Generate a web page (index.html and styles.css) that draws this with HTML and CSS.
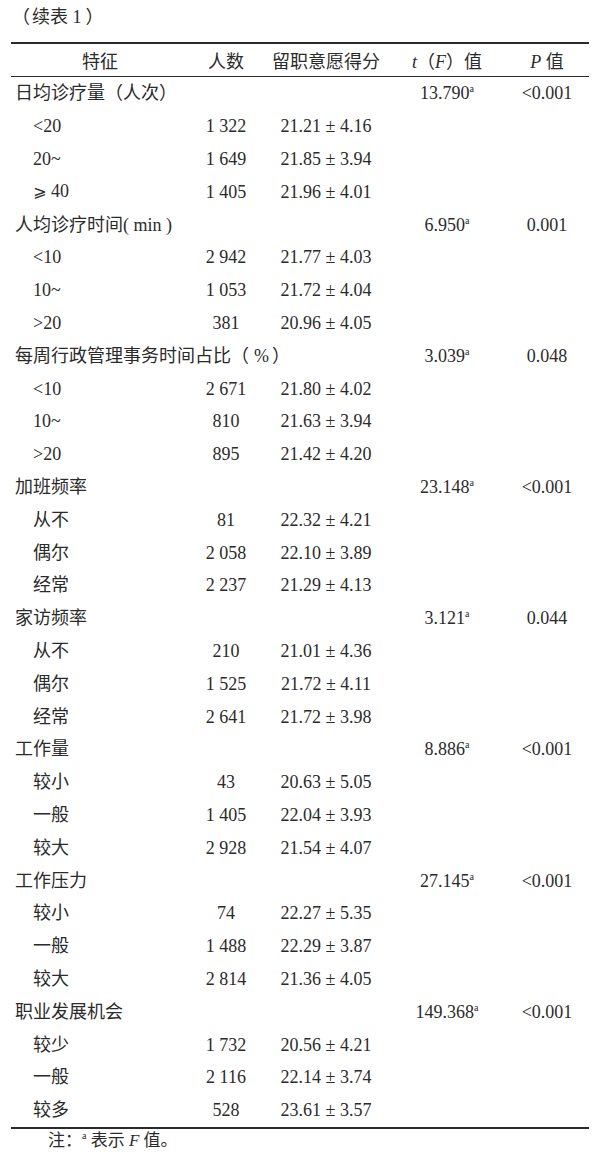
FILE: index.html
```html
<!DOCTYPE html>
<html lang="zh">
<head>
<meta charset="utf-8">
<title>续表1</title>
<link rel="stylesheet" href="styles.css">
</head>
<body>
<div class="page">
  <div class="caption"><span class="pl">（</span>续表 1<span class="pr">）</span></div>
  <table class="tbl">
    <colgroup>
      <col class="c1"><col class="c2"><col class="c3"><col class="c4"><col class="c5">
    </colgroup>
    <thead>
      <tr>
        <th>特征</th>
        <th>人数</th>
        <th>留职意愿得分</th>
        <th><i>t</i>（<i>F</i>）值</th>
        <th><i>P</i> 值</th>
      </tr>
    </thead>
    <tbody>
      <tr><td class="grp">日均诊疗量（人次）</td><td></td><td></td><td>13.790<sup class="sup">a</sup></td><td>&lt;0.001</td></tr>
      <tr><td class="sub">&lt;20</td><td>1 322</td><td>21.21 ± 4.16</td><td></td><td></td></tr>
      <tr><td class="sub">20~</td><td>1 649</td><td>21.85 ± 3.94</td><td></td><td></td></tr>
      <tr><td class="sub"><span class="ge">⩾</span> 40</td><td>1 405</td><td>21.96 ± 4.01</td><td></td><td></td></tr>

      <tr><td class="grp">人均诊疗时间( min )</td><td></td><td></td><td>6.950<sup class="sup">a</sup></td><td>0.001</td></tr>
      <tr><td class="sub">&lt;10</td><td>2 942</td><td>21.77 ± 4.03</td><td></td><td></td></tr>
      <tr><td class="sub">10~</td><td>1 053</td><td>21.72 ± 4.04</td><td></td><td></td></tr>
      <tr><td class="sub">&gt;20</td><td>381</td><td>20.96 ± 4.05</td><td></td><td></td></tr>

      <tr><td class="grp">每周行政管理事务时间占比（<span class="pct">%</span>）</td><td></td><td></td><td>3.039<sup class="sup">a</sup></td><td>0.048</td></tr>
      <tr><td class="sub">&lt;10</td><td>2 671</td><td>21.80 ± 4.02</td><td></td><td></td></tr>
      <tr><td class="sub">10~</td><td>810</td><td>21.63 ± 3.94</td><td></td><td></td></tr>
      <tr><td class="sub">&gt;20</td><td>895</td><td>21.42 ± 4.20</td><td></td><td></td></tr>

      <tr><td class="grp">加班频率</td><td></td><td></td><td>23.148<sup class="sup">a</sup></td><td>&lt;0.001</td></tr>
      <tr><td class="sub">从不</td><td>81</td><td>22.32 ± 4.21</td><td></td><td></td></tr>
      <tr><td class="sub">偶尔</td><td>2 058</td><td>22.10 ± 3.89</td><td></td><td></td></tr>
      <tr><td class="sub">经常</td><td>2 237</td><td>21.29 ± 4.13</td><td></td><td></td></tr>

      <tr><td class="grp">家访频率</td><td></td><td></td><td>3.121<sup class="sup">a</sup></td><td>0.044</td></tr>
      <tr><td class="sub">从不</td><td>210</td><td>21.01 ± 4.36</td><td></td><td></td></tr>
      <tr><td class="sub">偶尔</td><td>1 525</td><td>21.72 ± 4.11</td><td></td><td></td></tr>
      <tr><td class="sub">经常</td><td>2 641</td><td>21.72 ± 3.98</td><td></td><td></td></tr>

      <tr><td class="grp">工作量</td><td></td><td></td><td>8.886<sup class="sup">a</sup></td><td>&lt;0.001</td></tr>
      <tr><td class="sub">较小</td><td>43</td><td>20.63 ± 5.05</td><td></td><td></td></tr>
      <tr><td class="sub">一般</td><td>1 405</td><td>22.04 ± 3.93</td><td></td><td></td></tr>
      <tr><td class="sub">较大</td><td>2 928</td><td>21.54 ± 4.07</td><td></td><td></td></tr>

      <tr><td class="grp">工作压力</td><td></td><td></td><td>27.145<sup class="sup">a</sup></td><td>&lt;0.001</td></tr>
      <tr><td class="sub">较小</td><td>74</td><td>22.27 ± 5.35</td><td></td><td></td></tr>
      <tr><td class="sub">一般</td><td>1 488</td><td>22.29 ± 3.87</td><td></td><td></td></tr>
      <tr><td class="sub">较大</td><td>2 814</td><td>21.36 ± 4.05</td><td></td><td></td></tr>

      <tr><td class="grp">职业发展机会</td><td></td><td></td><td>149.368<sup class="sup">a</sup></td><td>&lt;0.001</td></tr>
      <tr><td class="sub">较少</td><td>1 732</td><td>20.56 ± 4.21</td><td></td><td></td></tr>
      <tr><td class="sub">一般</td><td>2 116</td><td>22.14 ± 3.74</td><td></td><td></td></tr>
      <tr class="last"><td class="sub">较多</td><td>528</td><td>23.61 ± 3.57</td><td></td><td></td></tr>
    </tbody>
  </table>
  <div class="note">注：<sup class="sup">a</sup> 表示 <i>F</i> 值。</div>
</div>
</body>
</html>
```
FILE: styles.css
```css
html, body {
  margin: 0;
  padding: 0;
  background: #ffffff;
}

body {
  font-family: "Liberation Serif", "Noto Sans CJK SC", serif;
  font-size: 18px;
  color: #2b2b2b;
}

.page {
  width: 592px;
}

.caption {
  height: 34px;
  line-height: 34px;
  padding-left: 12px;
}

.caption .pl {
  margin-right: 2px;
}

.caption .pr {
  margin-left: 4px;
}

.tbl {
  margin-top: 8px;
  margin-left: 11px;
  width: 578px;
  table-layout: fixed;
  border-collapse: collapse;
}

.c1 { width: 178px; }
.c2 { width: 74px; }
.c3 { width: 126px; }
.c4 { width: 116px; }
.c5 { width: 84px; }

.tbl th {
  font-weight: normal;
  height: 32px;
  padding: 0;
  text-align: center;
  vertical-align: middle;
  border-top: 2px solid #2a2a2a;
  border-bottom: 1px solid #2a2a2a;
  white-space: nowrap;
}

.tbl td {
  height: 32.8px;
  padding: 0;
  text-align: center;
  vertical-align: middle;
  white-space: nowrap;
  line-height: 20px;
}

.tbl td.grp {
  text-align: left;
  padding-left: 4px;
  overflow: visible;
}

.tbl td.sub {
  text-align: left;
  padding-left: 22px;
}

.tbl tr.last td {
  border-bottom: 2px solid #2a2a2a;
}

.pct {
  margin: 0 3px 0 5px;
}

.ge {
  font-family: "DejaVu Serif", "DejaVu Sans", serif;
  font-size: 16px;
}

.sup {
  font-size: 10px;
  line-height: 0;
  vertical-align: 7px;
}

i {
  font-style: italic;
}

.note {
  line-height: 24px;
  padding-left: 48px;
  margin-top: 0;
  font-size: 17px;
}
```
